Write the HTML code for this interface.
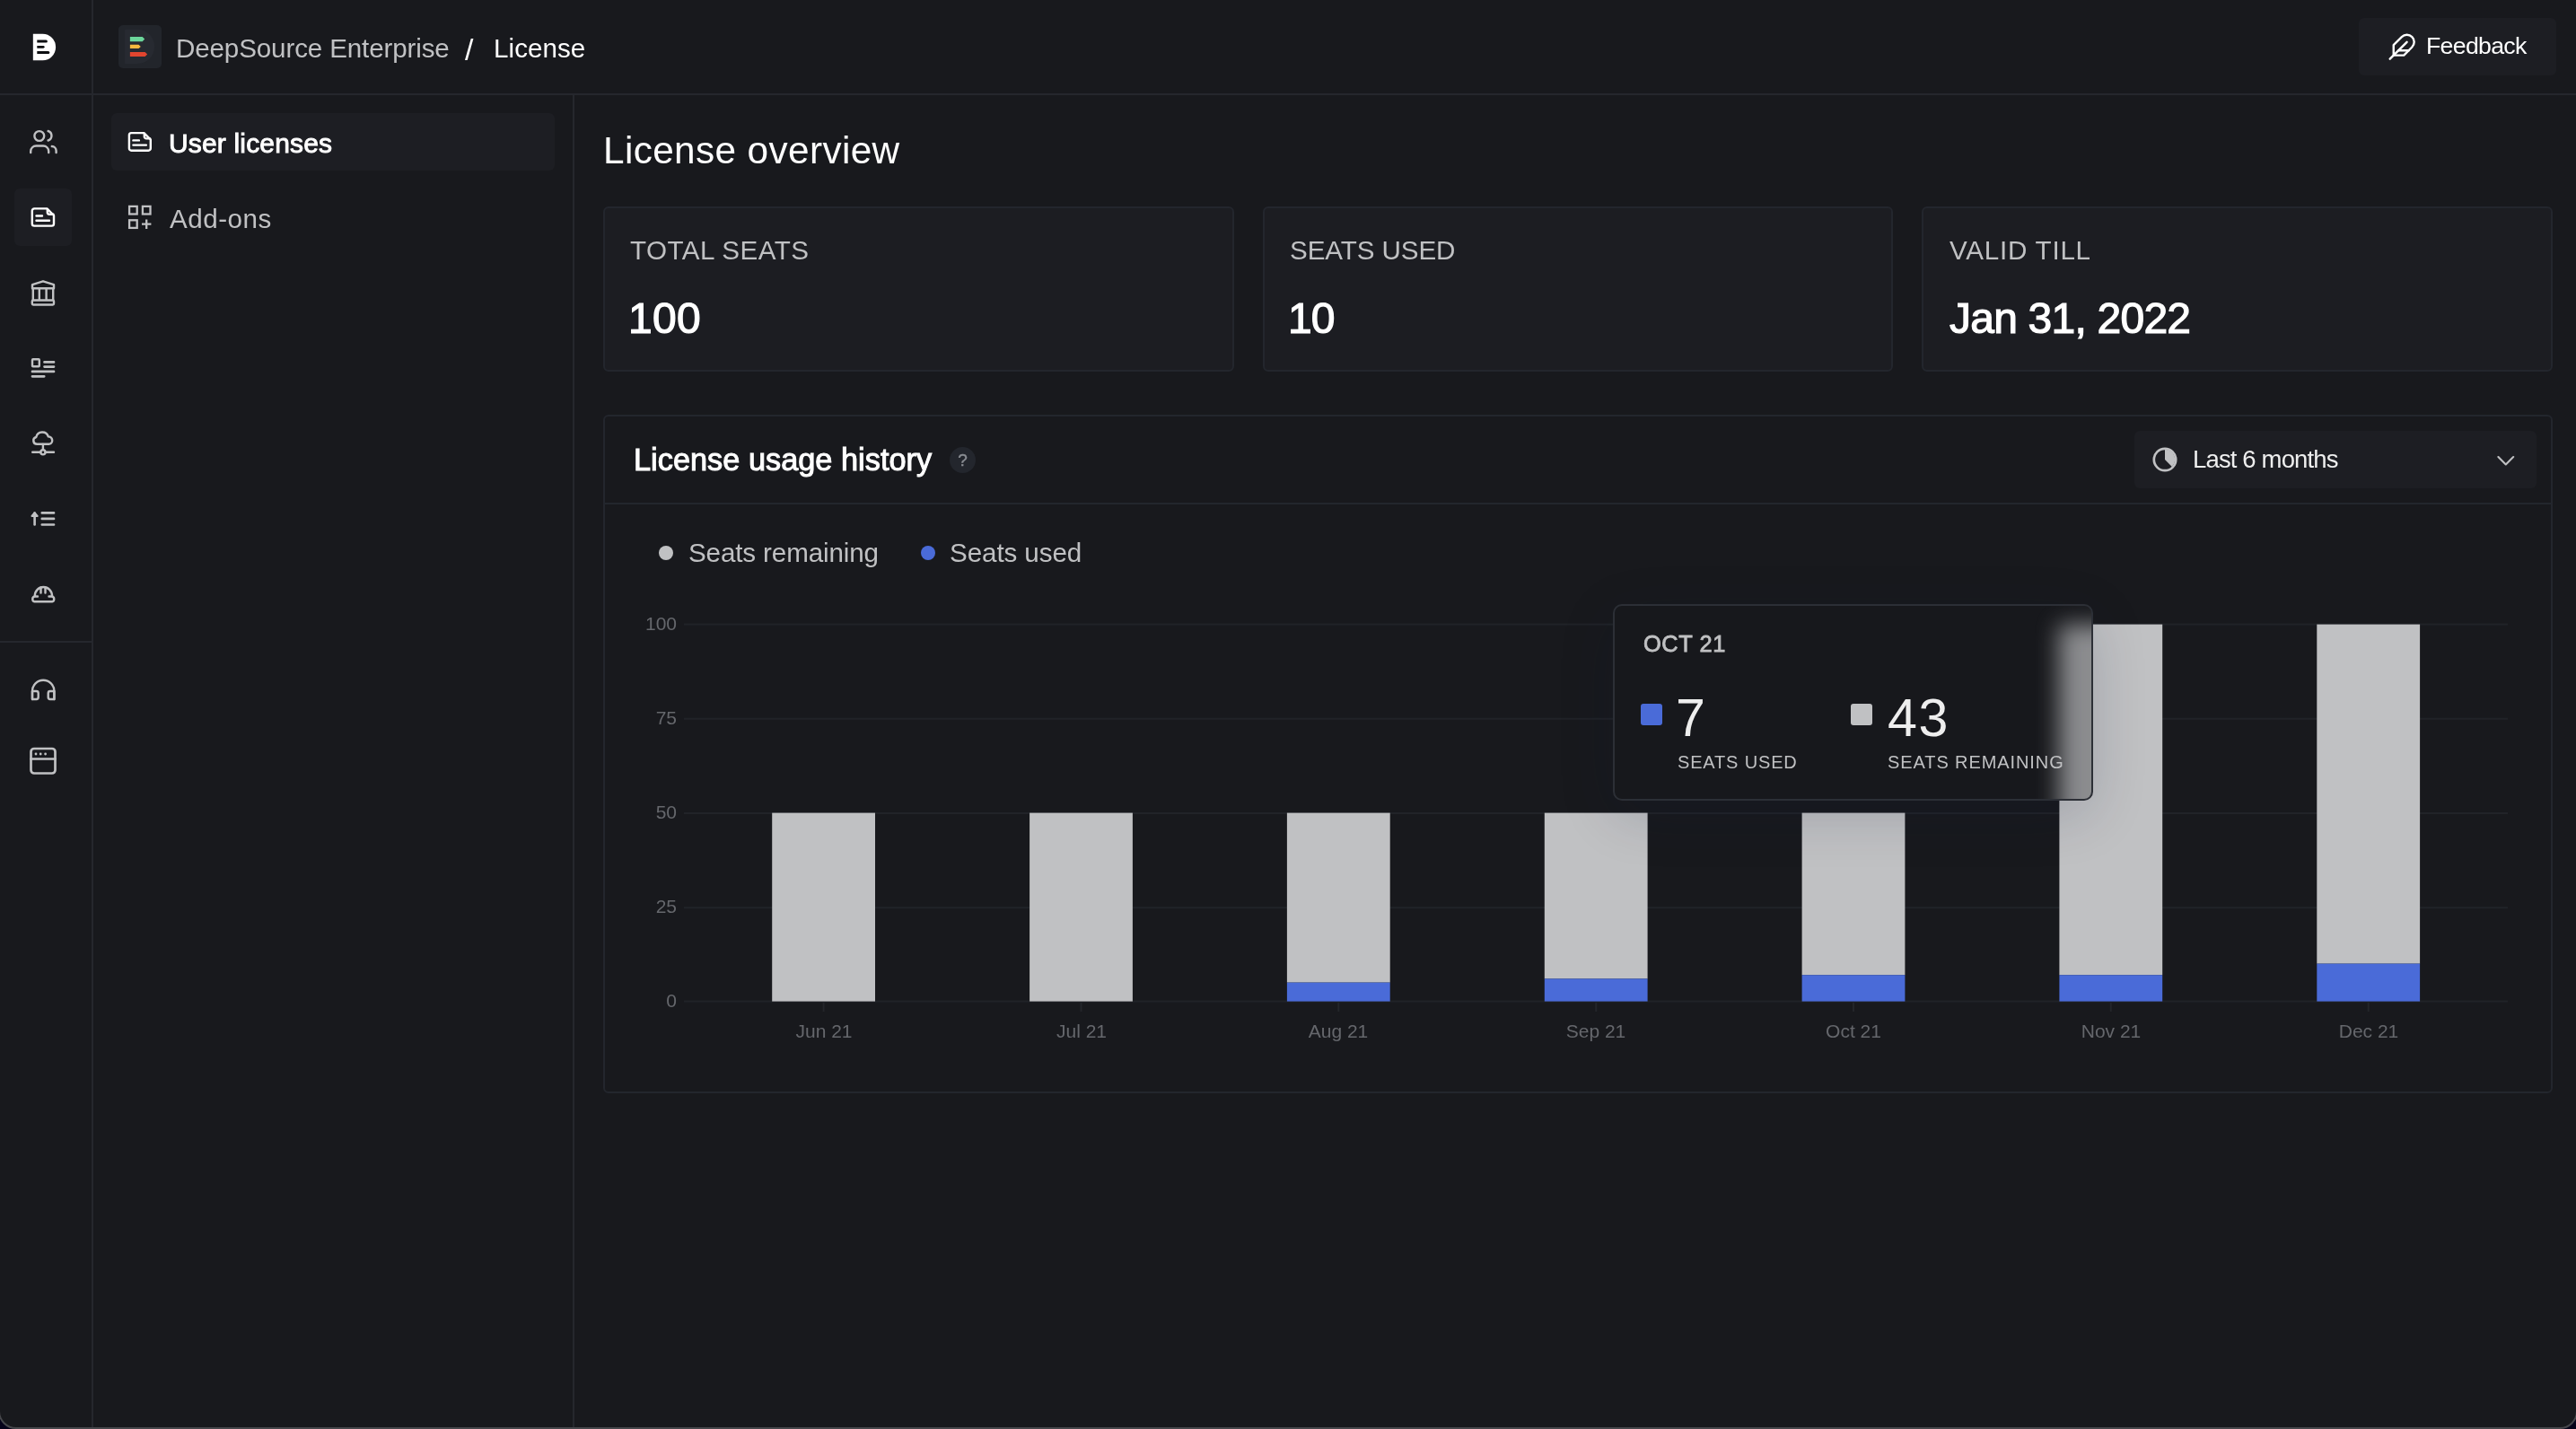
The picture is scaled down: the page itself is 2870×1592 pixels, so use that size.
<!DOCTYPE html>
<html><head><meta charset="utf-8">
<style>
html,body{margin:0;padding:0;}
body{width:2870px;height:1592px;background:#06031a;position:relative;overflow:hidden;font-family:"Liberation Sans",sans-serif;}
.win{position:absolute;left:-2px;top:-2px;width:2874px;height:1594px;box-sizing:border-box;background:#18191d;border:2px solid #46474b;border-radius:0 0 20px 20px;overflow:hidden;}
.a{position:absolute;white-space:nowrap;}
.t{position:absolute;white-space:nowrap;line-height:1;will-change:transform;}
.ln{position:absolute;background:#25272d;}
svg.ic{position:absolute;overflow:visible;}
</style></head><body>
<div class="win"></div>
<!-- borders -->
<div class="ln" style="left:0;top:104px;width:2870px;height:2px;"></div>
<div class="ln" style="left:102px;top:0;width:2px;height:1590px;"></div>
<div class="ln" style="left:638px;top:106px;width:2px;height:1484px;"></div>
<div class="ln" style="left:0;top:714px;width:102px;height:2px;"></div>

<!-- left rail -->
<div class="a" style="left:16px;top:209.5px;width:64px;height:64.5px;border-radius:6px;background:#1d1e23;"></div>
<svg class="ic" style="left:0;top:0" width="104" height="900" viewBox="0 0 104 900">
  <!-- logo D -->
  <path d="M36.8 37.8 H47.5 A14.6 14.7 0 0 1 47.5 67.2 H36.8 Z" fill="#ffffff"/>
  <g fill="#0d0e11">
    <path d="M41.3 44.6 H51.4 A1.5 1.5 0 0 1 51.4 47.6 H41.3 Z"/>
    <path d="M41.3 50.9 H48.2 A1.4 1.4 0 0 1 48.2 53.7 H41.3 Z"/>
    <path d="M41.3 57 H53.8 A1.5 1.5 0 0 1 53.8 60 H41.3 Z"/>
  </g>
  <g fill="none" stroke="#c0c1c3" stroke-width="2.4" stroke-linecap="round" stroke-linejoin="round">
    <!-- users -->
    <circle cx="43.8" cy="151.5" r="5.4"/>
    <path d="M34.2 170 v-1.5 a6 6 0 0 1 6 -6 h8 a6 6 0 0 1 6 6 v1.5"/>
    <path d="M53.6 146 a5.5 5.5 0 0 1 0 10.5"/>
    <path d="M57.8 163 a5 5 0 0 1 4.8 5 v2"/>
    <!-- bank -->
    <path d="M36 317.2 L48 313.3 L60 317.2 V321.2 H36 Z"/>
    <path d="M36.8 321.5 v12 M43.8 321.5 v12 M51.6 321.5 v12 M59.2 321.5 v12"/>
    <rect x="35.8" y="334.5" width="24.2" height="5" rx="1.2"/>
    <!-- list -->
    <rect x="36" y="400.3" width="7.8" height="8" rx="0.8"/>
    <path d="M49.5 403.4 h10.5 M49.5 408.6 h10.5 M36 413.9 h24 M36 419.3 h13.2" stroke-width="2.7"/>
    <!-- cloud network -->
    <path d="M41.2 494.7 a3.9 3.9 0 0 1 -0.9 -7.7 a7 7 0 0 1 13.5 -0.6 a4.2 4.2 0 0 1 1.1 8.3 Z"/>
    <path d="M47.9 495 v5.5"/>
    <circle cx="47.9" cy="503.8" r="2.6"/>
    <path d="M36.2 503.8 h9 M50.6 503.8 h9.4"/>
    <!-- sort up -->
    <path d="M38.6 584.5 v-13" stroke-width="2.6"/>
    <path d="M35.5 575 L38.6 571.2 L41.7 575 Z" fill="#c0c1c3" stroke-width="2"/>
    <path d="M46.8 571.4 h13.2 M46.8 577.9 h13.2 M46.8 584.5 h13.2" stroke-width="2.7"/>
    <!-- helmet -->
    <path d="M38.8 664 a9.6 10 0 0 1 19.2 0"/>
    <path d="M45.5 654.5 v6 M50.5 654.5 v6"/>
    <path d="M42 664.5 h-3.5 a3 3 0 0 0 0 5.8 h19.5 a3 3 0 0 0 0 -5.8 h-3.5"/>
    <!-- headphones -->
    <path d="M36 779 v-9 a12.2 12.2 0 0 1 24.4 0 v9"/>
    <path d="M36 770 h4.5 a2.2 2.2 0 0 1 2.2 2.2 v4.6 a2.2 2.2 0 0 1 -2.2 2.2 h-4.5 Z"/>
    <path d="M60.4 770 h-4.5 a2.2 2.2 0 0 0 -2.2 2.2 v4.6 a2.2 2.2 0 0 0 2.2 2.2 h4.5 Z"/>
    <!-- window -->
    <rect x="34.5" y="834" width="27" height="27.5" rx="3.5" stroke-width="2.7"/>
    <path d="M34.5 845.5 h27" stroke-width="2.7"/>
  </g>
  <g fill="#c0c1c3">
    <circle cx="40" cy="840" r="1.4"/><circle cx="45.2" cy="840" r="1.4"/><circle cx="50.6" cy="840" r="1.4"/>
  </g>
  <!-- active doc -->
  <g fill="none" stroke="#ffffff" stroke-width="2.4" stroke-linecap="round" stroke-linejoin="round">
    <path d="M38.2 232.4 H52.4 L60 240 V249.2 A2.4 2.4 0 0 1 57.6 251.6 H38.2 A2.4 2.4 0 0 1 35.8 249.2 V234.8 A2.4 2.4 0 0 1 38.2 232.4 Z"/>
    <path d="M52.8 233.2 V236.6 A2.2 2.2 0 0 0 55 238.8 H59.4"/>
    <path d="M40.5 240.5 h6.5 M40.5 245.7 h14.5"/>
  </g>
</svg>

<!-- header -->
<div class="a" style="left:132px;top:28px;width:48px;height:48px;border-radius:5px;background:#22252b;"></div>
<svg class="ic" style="left:0;top:0" width="200" height="100" viewBox="0 0 200 100">
  <path d="M139.1 32.7 H153 A19.15 19.15 0 0 1 153 71 H139.1 Z" fill="#272a31"/>
  <path d="M144.9 40.9 H158.7 L161.2 43.55 L158.7 46.2 H144.9 Z" fill="#6cd69b"/>
  <path d="M144.9 49.8 H154.5 L156.8 51.95 L154.5 54.1 H144.9 Z" fill="#f5b83f"/>
  <path d="M144.9 58 H161.6 L164.1 60.5 L161.6 63 H144.9 Z" fill="#e2452f"/>
</svg>

<div class="a" style="left:2628px;top:20px;width:220px;height:64px;border-radius:6px;background:#1d1e23;"></div>
<svg class="ic" style="left:2659.5px;top:36.1px" width="32.4" height="32.4" viewBox="0 0 24 24">
  <g fill="none" stroke="#ffffff" stroke-width="1.78" stroke-linecap="round" stroke-linejoin="round">
    <path d="M20.24 12.24a6 6 0 0 0-8.49-8.49L5 10.5V19h8.5z"/>
    <line x1="16" y1="8" x2="2" y2="22"/>
    <line x1="17.5" y1="15" x2="9" y2="15"/>
  </g>
</svg>

<!-- secondary nav -->
<div class="a" style="left:124px;top:126px;width:494px;height:64px;border-radius:6px;background:#1d1e23;"></div>
<svg class="ic" style="left:0;top:0" width="200" height="280" viewBox="0 0 200 280">
  <g fill="none" stroke="#ffffff" stroke-width="2.4" stroke-linecap="round" stroke-linejoin="round">
    <path d="M146.3 148.1 H160.4 L167.8 155.5 V165.3 A2.4 2.4 0 0 1 165.4 167.7 H146.3 A2.4 2.4 0 0 1 143.9 165.3 V150.5 A2.4 2.4 0 0 1 146.3 148.1 Z"/>
    <path d="M160.8 148.9 V152.2 A2.2 2.2 0 0 0 163 154.4 H167.2"/>
    <path d="M148.4 156.4 h6.5 M148.4 161.6 h14.5"/>
  </g>
  <g fill="none" stroke="#c0c1c3" stroke-width="2.3">
    <rect x="144.1" y="229.9" width="8.6" height="8.6"/>
    <rect x="158.9" y="229.9" width="8.6" height="8.6"/>
    <rect x="144.1" y="245.3" width="8.6" height="8.6"/>
    <path d="M163.2 244.5 v10.5 M158 249.7 h10.4"/>
  </g>
</svg>

<!-- main -->

<div class="a card" style="left:672px;top:230px;width:702.67px;height:184px;box-sizing:border-box;border:2px solid #23262d;border-radius:6px;background:#1c1d22;"></div>
<div class="a card" style="left:1406.67px;top:230px;width:702.67px;height:184px;box-sizing:border-box;border:2px solid #23262d;border-radius:6px;background:#1c1d22;"></div>
<div class="a card" style="left:2141.33px;top:230px;width:702.67px;height:184px;box-sizing:border-box;border:2px solid #23262d;border-radius:6px;background:#1c1d22;"></div>


<!-- chart card -->
<div class="a" style="left:672px;top:462px;width:2172px;height:756px;box-sizing:border-box;border:2px solid #23262d;border-radius:6px;"></div>
<div class="a" style="left:674px;top:560px;width:2168px;height:2px;background:#23262d;"></div>
<div class="a" style="left:1057.5px;top:497.5px;width:29px;height:29px;border-radius:50%;background:#23262d;"></div><div class="a" style="left:1057.5px;top:497.5px;width:29px;height:29px;color:#8b8e94;font-size:19px;line-height:29px;text-align:center;-webkit-text-stroke:0.4px #8b8e94;will-change:transform;">?</div>

<div class="a" style="left:2378px;top:480px;width:448px;height:64px;border-radius:6px;background:#1d1e23;"></div>
<svg class="ic" style="left:2390px;top:490px" width="50" height="45" viewBox="0 0 50 45">
  <circle cx="22" cy="22" r="12.2" fill="none" stroke="#c0c1c3" stroke-width="2.7"/>
  <path d="M22 22 V10.8 A11.2 11.2 0 0 1 29.9 29.9 Z" fill="#c0c1c3"/>
</svg>
<svg class="ic" style="left:2770px;top:500px" width="40" height="30" viewBox="0 0 40 30">
  <path d="M13.4 9 L21.8 17.5 L30.2 9" fill="none" stroke="#c0c1c3" stroke-width="2.1" stroke-linecap="round" stroke-linejoin="round"/>
</svg>

<!-- legend -->
<div class="a" style="left:734px;top:608px;width:16px;height:16px;border-radius:50%;background:#c0c1c3;"></div>
<div class="a" style="left:1026px;top:608px;width:16px;height:16px;border-radius:50%;background:#4a6bd8;"></div>

<!-- chart -->
<svg class="ic" style="left:0;top:0" width="2870" height="1300" viewBox="0 0 2870 1300">
  <rect x="762" y="694.6" width="2032" height="2" fill="#212328"/>
  <rect x="762" y="799.8" width="2032" height="2" fill="#212328"/>
  <rect x="762" y="905.0" width="2032" height="2" fill="#212328"/>
  <rect x="762" y="1010.2" width="2032" height="2" fill="#212328"/>
  <rect x="762" y="1114.6" width="2032" height="2" fill="#212328"/>
  <rect x="860.2" y="905.6" width="114.8" height="210.0" fill="#c0c1c3"/>
  <rect x="916.6" y="1117" width="2" height="10" fill="#23252a"/>
  <rect x="1147.1" y="905.6" width="114.8" height="210.0" fill="#c0c1c3"/>
  <rect x="1203.5" y="1117" width="2" height="10" fill="#23252a"/>
  <rect x="1433.9" y="905.6" width="114.8" height="189.0" fill="#c0c1c3"/>
  <rect x="1433.9" y="1094.6" width="114.8" height="21.0" fill="#4a6bd8"/>
  <rect x="1490.3" y="1117" width="2" height="10" fill="#23252a"/>
  <rect x="1720.8" y="905.6" width="114.8" height="184.8" fill="#c0c1c3"/>
  <rect x="1720.8" y="1090.4" width="114.8" height="25.2" fill="#4a6bd8"/>
  <rect x="1777.2" y="1117" width="2" height="10" fill="#23252a"/>
  <rect x="2007.6" y="905.6" width="114.8" height="180.6" fill="#c0c1c3"/>
  <rect x="2007.6" y="1086.2" width="114.8" height="29.4" fill="#4a6bd8"/>
  <rect x="2064.0" y="1117" width="2" height="10" fill="#23252a"/>
  <rect x="2294.4" y="695.6" width="114.8" height="390.6" fill="#c0c1c3"/>
  <rect x="2294.4" y="1086.2" width="114.8" height="29.4" fill="#4a6bd8"/>
  <rect x="2350.8" y="1117" width="2" height="10" fill="#23252a"/>
  <rect x="2581.3" y="695.6" width="114.8" height="378.0" fill="#c0c1c3"/>
  <rect x="2581.3" y="1073.6" width="114.8" height="42.0" fill="#4a6bd8"/>
  <rect x="2637.7" y="1117" width="2" height="10" fill="#23252a"/>
</svg>

<!-- tooltip -->
<div class="a" style="left:1797px;top:673px;width:535px;height:219px;box-sizing:border-box;border:2px solid #2c2f36;border-radius:10px;overflow:hidden;background:#17181c;box-shadow:0 16px 64px -4px rgba(14,26,56,0.2);"><div style="position:absolute;left:495px;top:20.7px;width:160px;height:400px;background:#c0c1c3;opacity:0.69;filter:blur(13px);"></div></div>
<div class="a" style="left:1828px;top:784px;width:24px;height:24px;border-radius:3px;background:#4a6bd8;"></div>
<div class="a" style="left:2062px;top:784px;width:24px;height:24px;border-radius:3px;background:#c0c1c3;"></div>

<div class="t" style="left:195.8px;top:39.0px;font-size:29.6px;color:#c0c1c3;letter-spacing:-0.14px;">DeepSource Enterprise</div>
<div class="t" style="left:517.8px;top:38.7px;font-size:33.8px;color:#ffffff;">/</div>
<div class="t" style="left:550.4px;top:39.0px;font-size:29.6px;color:#ffffff;letter-spacing:0.05px;">License</div>
<div class="t" style="left:2703.3px;top:37.9px;font-size:26.7px;color:#ffffff;letter-spacing:-0.70px;">Feedback</div>
<div class="t" style="left:187.8px;top:145.3px;font-size:30px;color:#ffffff;-webkit-text-stroke:0.9px #ffffff;letter-spacing:0.17px;">User licenses</div>
<div class="t" style="left:188.9px;top:229.0px;font-size:29.6px;color:#c0c1c3;letter-spacing:0.50px;">Add-ons</div>
<div class="t" style="left:671.7px;top:146.9px;font-size:42.3px;color:#ffffff;letter-spacing:0.38px;">License overview</div>
<div class="t" style="left:702.2px;top:263.6px;font-size:29.6px;color:#c0c1c3;letter-spacing:0.43px;">TOTAL SEATS</div>
<div class="t" style="left:700.0px;top:330.5px;font-size:48px;color:#ffffff;-webkit-text-stroke:1.2px #ffffff;letter-spacing:0.25px;">100</div>
<div class="t" style="left:1436.5px;top:263.6px;font-size:29.6px;color:#c0c1c3;letter-spacing:-0.09px;">SEATS USED</div>
<div class="t" style="left:1434.5px;top:330.5px;font-size:48px;color:#ffffff;-webkit-text-stroke:1.2px #ffffff;letter-spacing:-0.90px;">10</div>
<div class="t" style="left:2172.4px;top:263.6px;font-size:29.6px;color:#c0c1c3;letter-spacing:0.76px;">VALID TILL</div>
<div class="t" style="left:2172.0px;top:330.5px;font-size:48px;color:#ffffff;-webkit-text-stroke:1.2px #ffffff;letter-spacing:-0.78px;">Jan 31, 2022</div>
<div class="t" style="left:706.0px;top:495.2px;font-size:34.3px;color:#ffffff;-webkit-text-stroke:1.0px #ffffff;letter-spacing:0.02px;">License usage history</div>
<div class="t" style="left:2442.9px;top:497.6px;font-size:27.5px;color:#eeeeee;letter-spacing:-0.85px;">Last 6 months</div>
<div class="t" style="left:766.6px;top:601.4px;font-size:29.6px;color:#c0c1c3;letter-spacing:-0.13px;">Seats remaining</div>
<div class="t" style="left:1057.8px;top:601.4px;font-size:29.6px;color:#c0c1c3;letter-spacing:-0.09px;">Seats used</div>
<div class="t" style="left:653.5px;top:684.0px;font-size:21px;color:#65676c;width:100.0px;text-align:right;">100</div>
<div class="t" style="left:653.5px;top:789.0px;font-size:21px;color:#65676c;width:100.0px;text-align:right;">75</div>
<div class="t" style="left:653.5px;top:894.0px;font-size:21px;color:#65676c;width:100.0px;text-align:right;">50</div>
<div class="t" style="left:653.5px;top:999.0px;font-size:21px;color:#65676c;width:100.0px;text-align:right;">25</div>
<div class="t" style="left:653.5px;top:1104.0px;font-size:21px;color:#65676c;width:100.0px;text-align:right;">0</div>
<div class="t" style="left:817.6px;top:1138.0px;font-size:21.0px;color:#65676c;width:200.0px;text-align:center;">Jun 21</div>
<div class="t" style="left:1104.5px;top:1138.0px;font-size:21.0px;color:#65676c;width:200.0px;text-align:center;">Jul 21</div>
<div class="t" style="left:1391.3px;top:1138.0px;font-size:21.0px;color:#65676c;width:200.0px;text-align:center;">Aug 21</div>
<div class="t" style="left:1678.2px;top:1138.0px;font-size:21.0px;color:#65676c;width:200.0px;text-align:center;">Sep 21</div>
<div class="t" style="left:1965.0px;top:1138.0px;font-size:21.0px;color:#65676c;width:200.0px;text-align:center;">Oct 21</div>
<div class="t" style="left:2251.8px;top:1138.0px;font-size:21.0px;color:#65676c;width:200.0px;text-align:center;">Nov 21</div>
<div class="t" style="left:2538.7px;top:1138.0px;font-size:21.0px;color:#65676c;width:200.0px;text-align:center;">Dec 21</div>
<div class="t" style="left:1830.6px;top:705.0px;font-size:25.4px;color:#c0c1c3;-webkit-text-stroke:0.8px #c0c1c3;letter-spacing:0.60px;">OCT 21</div>
<div class="t" style="left:1867.3px;top:770.4px;font-size:59.2px;color:#eeeeee;">7</div>
<div class="t" style="left:1869.0px;top:838.8px;font-size:20px;color:#c0c1c3;letter-spacing:0.84px;">SEATS USED</div>
<div class="t" style="left:2103.2px;top:770.4px;font-size:59.2px;color:#eeeeee;letter-spacing:1.50px;">43</div>
<div class="t" style="left:2103.0px;top:838.8px;font-size:20px;color:#c0c1c3;letter-spacing:0.91px;">SEATS REMAINING</div>
</body></html>
